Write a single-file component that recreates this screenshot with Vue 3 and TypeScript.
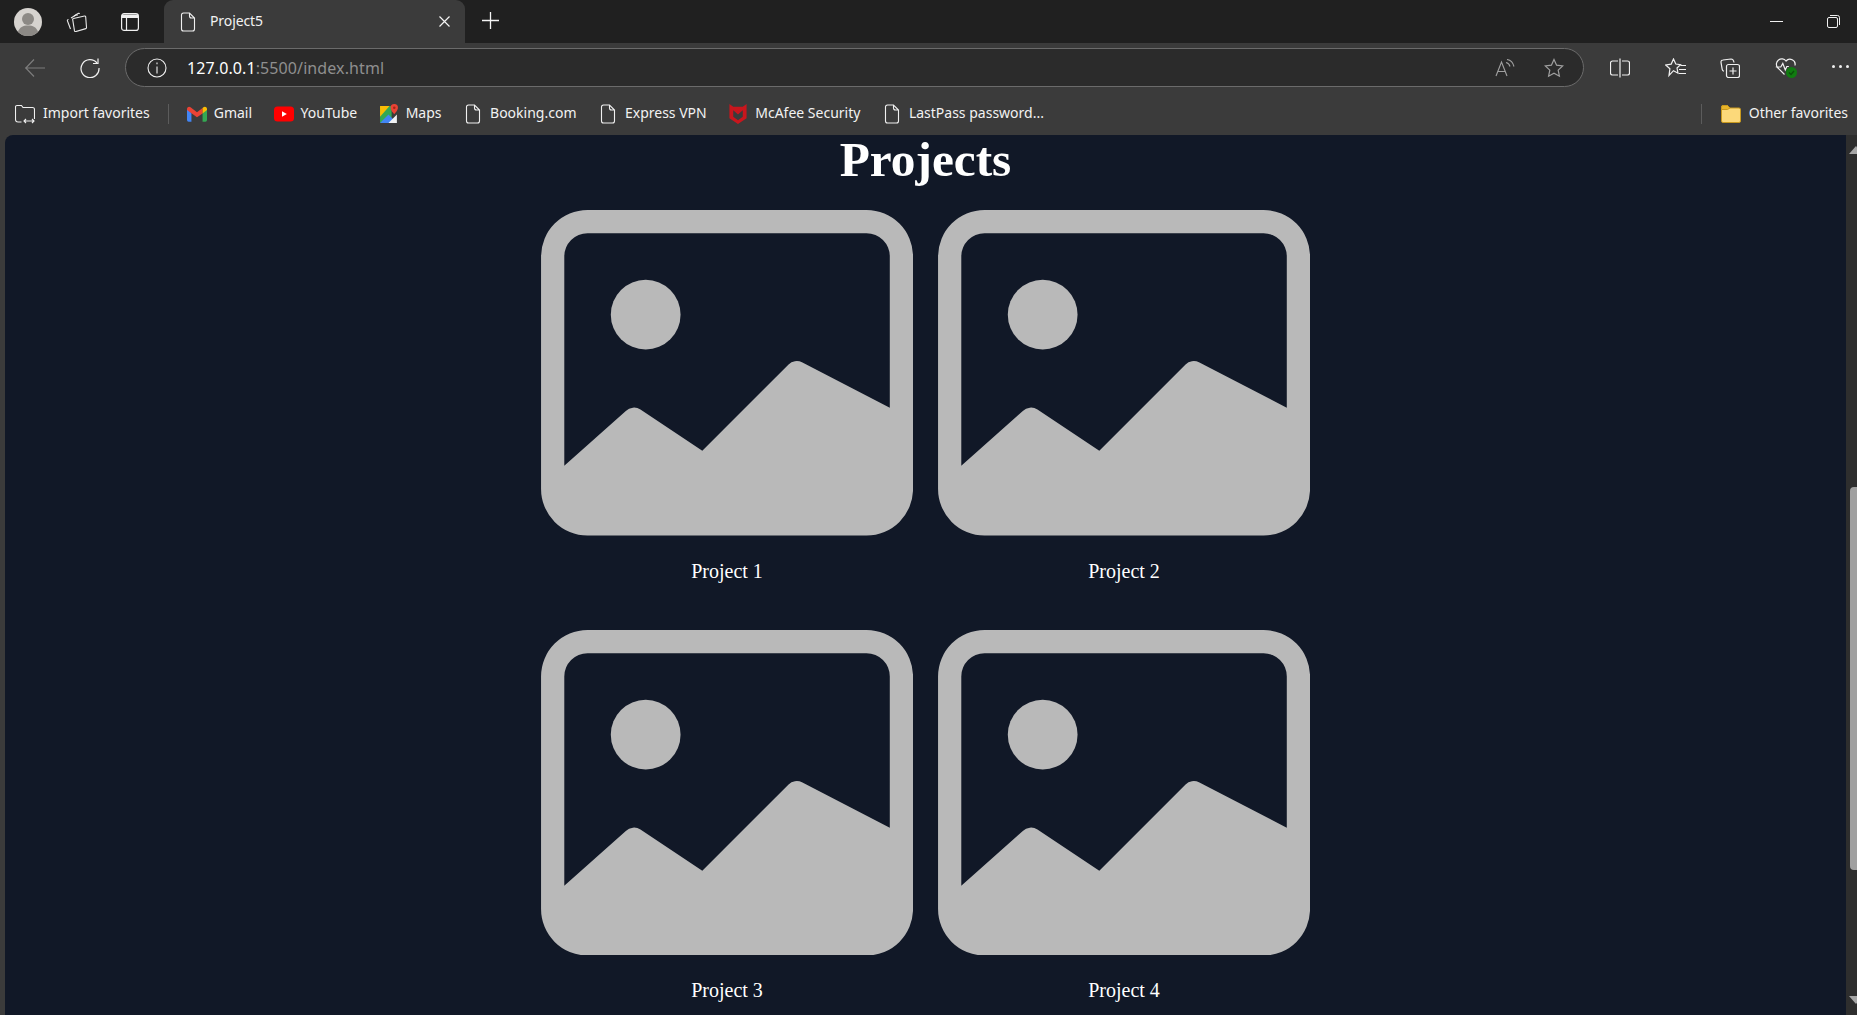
<script setup lang="ts">
const projects = ['Project 1', 'Project 2', 'Project 3', 'Project 4']
const docPath = 'M3 1h6l5 5v11a2 2 0 0 1-2 2H3a2 2 0 0 1-2-2V3a2 2 0 0 1 2-2zM9 1v3a2 2 0 0 0 2 2h3'
const pages = ['Booking.com', 'Express VPN']
</script>

<template>
  <div class="window">
    <header class="tabbar">
      <svg class="avatar" viewBox="0 0 28 28">
        <circle cx="14" cy="14" r="14" fill="#d6d3cf" />
        <circle cx="14" cy="11" r="6" fill="#8c8985" />
        <path d="M4 24c1.500-5 5-6.500 10-6.500s8.500 1.500 10 6.500a14 14 0 0 1-20 0z" fill="#8c8985" />
      </svg>
      <svg class="collections" viewBox="0 0 22 20" fill="none" stroke="#e8e8e8" stroke-width="1.100">
        <path d="M8 4l4-2.500a1 1 0 0 1 1.500.5" />
        <path d="M5 6l5-3a1 1 0 0 1 1.500 .5" />
        <path d="M2.500 7.500a1 1 0 0 0-1 1.500l3 8" />
        <path d="M7.500 6.500l11-2.500a1 1 0 0 1 1.200 1l.8 10.500a1 1 0 0 1-.7 1.100l-10 3a1 1 0 0 1-1.300-.7L6.700 7.700a1 1 0 0 1 .8-1.200z" />
      </svg>
      <svg class="tabs-icon" viewBox="0 0 18 18" fill="none" stroke="#f0f0f0" stroke-width="1.200">
        <rect x=".6" y=".6" width="16.800" height="16.800" rx="2.500" />
        <path d="M1 1.500h16V5H1z" fill="#f0f0f0" stroke="none" />
        <path d="M5.500 5v12.500" />
      </svg>
      <div class="tab">
        <svg class="doc-tab" viewBox="0 0 15 20" fill="none" stroke="#f0f0f0" stroke-width="1.100">
          <path :d="docPath" />
        </svg>
        <span class="tab-title">Project5</span>
        <svg class="tab-close" viewBox="0 0 11 11" stroke="#f4f4f4" stroke-width="1.200">
          <path d="M.5.500l10 10M10.500.500l-10 10" />
        </svg>
      </div>
      <svg class="plus" viewBox="0 0 17 17" stroke="#f4f4f4" stroke-width="1.300">
        <path d="M8.500 0v17M0 8.500h17" />
      </svg>
      <div class="window-controls">
        <span class="minimize"></span>
        <svg class="restore" viewBox="0 0 13 13" fill="none" stroke="#f0f0f0" stroke-width="1">
          <rect x=".5" y="2.500" width="10" height="10" rx="1.500" />
          <path d="M3 .5h7.500a2 2 0 0 1 2 2V10" />
        </svg>
      </div>
    </header>

    <div class="toolbar">
      <svg class="back" viewBox="0 0 20 18" fill="none" stroke="#7d7d7d" stroke-width="1.200">
        <path d="M0 9h20M9 .5L.8 9 9 17.500" />
      </svg>
      <svg class="reload" viewBox="0 0 20 20" fill="none" stroke="#f0f0f0" stroke-width="1.200">
        <path d="M17 5a9 9 0 1 0 2 5" />
        <path d="M18 .5V5.500h-5" />
      </svg>
      <div class="address">
        <svg class="info" viewBox="0 0 20 20" fill="none" stroke="#f0f0f0" stroke-width="1.100">
          <circle cx="10" cy="10" r="9" />
          <path d="M10 8.500v7M10 4.500v1.800" />
        </svg>
        <span class="url"><span class="host">127.0.0.1</span>:5500/index.html</span>
        <svg class="read-aloud" viewBox="0 0 20 18" fill="none" stroke="#a0a0a0" stroke-width="1.100">
          <path d="M1 17L6.500 3 12 17M3 12.500h7" />
          <path d="M11 3.500c2 .5 3.500 2 4 4M12 .5c3.500 .5 6 3 7 7" />
        </svg>
        <svg class="star" viewBox="0 0 20 20" fill="none" stroke="#a0a0a0" stroke-width="1.200">
          <path d="M10 1.500l2.600 5.700 6.100.7-4.500 4.200 1.200 6.100-5.400-3-5.400 3 1.200-6.100L1.300 7.900l6.100-.7z" />
        </svg>
      </div>
      <svg class="split" viewBox="0 0 20 20" fill="none" stroke="#f0f0f0" stroke-width="1.200">
        <path d="M8 3H2.500a2 2 0 0 0-2 2v10a2 2 0 0 0 2 2H8M12 3h5.500a2 2 0 0 1 2 2v10a2 2 0 0 1-2 2H12M10 .5v19" />
      </svg>
      <svg class="favs" viewBox="0 0 21 20" fill="none" stroke="#f0f0f0" stroke-width="1.200">
        <path d="M8.500 1l2.300 5 4.700.6-3.500 3.400 1 5.200-4.500-2.500-4.500 4.800.9-6.800L.7 7l5.500-.9z" />
        <path d="M15.500 7.500H21M14 11.500h7M14 15.500h7" />
      </svg>
      <svg class="coll" viewBox="0 0 20 20" fill="none" stroke="#f0f0f0" stroke-width="1.200">
        <path d="M14 4.500c-.3-2-1.500-3.500-3-3.500L3 2a2 2 0 0 0-2 2.300l1.200 7c.2 1 .8 1.700 1.800 2" />
        <rect x="6.500" y="6.500" width="13" height="13" rx="2" />
        <path d="M13 9.500v7M9.500 13h7" />
      </svg>
      <svg class="health" viewBox="0 0 22 21">
        <path d="M9.500 17.500L2.500 10.500a5.200 5.200 0 0 1 8.500-6.500 5.200 5.200 0 0 1 9 4.500M.8 10h5l2-3.500 2.500 6.500 1.500-3.500h2" fill="none" stroke="#f0f0f0" stroke-width="1.200" />
        <circle cx="16.500" cy="15.500" r="5.500" fill="#107c10" />
        <path d="M14 15.500l2 2 3-3.500" fill="none" stroke="#0b4f0b" stroke-width="1.300" />
      </svg>
      <div class="dots"><i></i><i></i><i></i></div>
    </div>

    <nav class="bookmarks">
      <div class="mark wide">
        <svg class="mark-ico" viewBox="0 0 20 20" fill="none" stroke="#f0f0f0" stroke-width="1.100">
          <path d="M6.500 18H3a2.500 2.500 0 0 1-2.500-2.500V3A1.500 1.500 0 0 1 2 1.500h4.500L8 3.500h9.500A2 2 0 0 1 19.500 5.500V15" />
          <path d="M9 17h10M11 15l-2 2 2 2M17 15l2 2-2 2" />
        </svg>
        <span>Import favorites</span>
      </div>
      <span class="sep"></span>
      <div class="mark">
        <svg class="mark-ico" viewBox="0 0 18 14">
          <path d="M0 2v10.500A1.500 1.500 0 0 0 1.500 14H4V6z" fill="#4285f4" />
          <path d="M14 6v8h2.500a1.500 1.500 0 0 0 1.500-1.500V2z" fill="#34a853" />
          <path d="M0 2.500a2 2 0 0 1 3.200-1.600L9 5.500l5-4v5L9 10 0 3.500z" fill="#ea4335" />
          <path d="M14 1.500l.8-.6A2 2 0 0 1 18 2.500v1L14 6.500z" fill="#fbbc04" />
        </svg>
        <span>Gmail</span>
      </div>
      <div class="mark">
        <svg class="mark-ico" viewBox="0 0 20 15">
          <rect width="20" height="15" rx="3.500" fill="#f00" />
          <path d="M8 4.800v5.400l4.800-2.700z" fill="#fff" />
        </svg>
        <span>YouTube</span>
      </div>
      <div class="mark">
        <svg class="mark-ico" viewBox="0 0 19 19">
          <path d="M1 2h11v16H1z" fill="#34a853" />
          <path d="M1 2h9L1 12z" fill="#fbbc04" />
          <path d="M1 18l8-8 8 8z" fill="#4285f4" />
          <path d="M9 18l8-8v8z" fill="#f1f3f4" />
          <path d="M14.500 0A3.500 3.500 0 0 1 18 3.500c0 2.500-3.500 6-3.500 6s-3.500-3.500-3.500-6A3.500 3.500 0 0 1 14.500 0z" fill="#ea4335" />
          <circle cx="14.500" cy="3.500" r="1.200" fill="#a52714" />
        </svg>
        <span>Maps</span>
      </div>
      <div v-for="page in pages" :key="page" class="mark">
        <svg class="mark-ico" viewBox="0 0 15 20" fill="none" stroke="#f0f0f0" stroke-width="1.100">
          <path :d="docPath" />
        </svg>
        <span>{{ page }}</span>
      </div>
      <div class="mark">
        <svg class="mark-ico" viewBox="0 0 18 21">
          <path d="M0 0l4 3h10l4-3v15l-9 6-9-6zM4 6.500v7l5 3.500 5-3.500v-7l-5 4.500z" fill="#c8161d" fill-rule="evenodd" />
        </svg>
        <span>McAfee Security</span>
      </div>
      <div class="mark">
        <svg class="mark-ico" viewBox="0 0 15 20" fill="none" stroke="#f0f0f0" stroke-width="1.100">
          <path :d="docPath" />
        </svg>
        <span>LastPass password...</span>
      </div>
      <div class="other">
        <span class="sep"></span>
        <div class="mark wide">
          <svg class="mark-ico" viewBox="0 0 20 18">
            <path d="M.5 2A1.500 1.500 0 0 1 2 .5h4.500L9 3h9a1.500 1.500 0 0 1 1.500 1.500V16a1.500 1.500 0 0 1-1.500 1.500H2A1.500 1.500 0 0 1 .5 16z" fill="#fcd97a" stroke="#c8991e" />
            <path d="M.5 4.500h6L9 3 6.500.5H2A1.500 1.500 0 0 0 .5 2z" fill="#e8b42a" stroke="#c8991e" />
          </svg>
          <span>Other favorites</span>
        </div>
      </div>
    </nav>

    <div class="viewport">
      <main class="page">
        <h1>Projects</h1>
        <section class="grid">
          <figure v-for="name in projects" :key="name" class="project">
            <svg class="thumb" viewBox="0 1 16 14" fill="currentColor">
              <path d="M6.002 5.500a1.500 1.500 0 1 1-3 0 1.500 1.500 0 0 1 3 0z" />
              <path d="M2.002 1a2 2 0 0 0-2 2v10a2 2 0 0 0 2 2h12a2 2 0 0 0 2-2V3a2 2 0 0 0-2-2h-12zm12 1a1 1 0 0 1 1 1v6.500l-3.777-1.947a.5.5 0 0 0-.577.093l-3.710 3.710-2.660-1.772a.5.5 0 0 0-.630.062L1.002 12V3a1 1 0 0 1 1-1h12z" />
            </svg>
            <figcaption>{{ name }}</figcaption>
          </figure>
        </section>
      </main>
      <div class="scrollbar">
        <span class="arrow up"></span>
        <span class="thumb-bar"></span>
        <span class="arrow down"></span>
      </div>
    </div>
  </div>
</template>

<style>
html, body { margin: 0; overflow: hidden; background: #3b3b3b; }
</style>

<style scoped>
.window {
  height: 100vh;
  display: flex;
  flex-direction: column;
  overflow: hidden;
  font-family: "Noto Sans", "Open Sans", sans-serif;
  color: #f2f2f2;
}
svg { display: block; flex: none; }

/* tab strip */
.tabbar {
  height: 43px;
  flex: none;
  display: flex;
  align-items: center;
  background: #202020;
  padding-left: 14px;
}
.avatar { width: 28px; height: 28px; }
.collections { width: 22px; height: 20px; margin-left: 24px; }
.tabs-icon { width: 18px; height: 18px; margin-left: 33px; }
.tab {
  align-self: stretch;
  width: 301px;
  margin-left: 25px;
  display: flex;
  align-items: center;
  background: #3b3b3b;
  border-radius: 9px 9px 0 0;
  padding: 0 15px 0 16px;
  box-sizing: border-box;
}
.doc-tab { width: 16px; height: 20px; }
.tab-title { margin-left: 14px; font-size: 14px; letter-spacing: -.1px; flex: 1; margin-top: -2px; }
.tab-close { width: 11px; height: 11px; }
.plus { width: 17px; height: 17px; margin-left: 17px; margin-top: -2px; }
.window-controls {
  margin-left: auto;
  display: flex;
  align-items: center;
  padding-right: 17px;
  gap: 44px;
  margin-top: -1px;
}
.minimize { width: 13px; height: 1px; background: #f0f0f0; }
.restore { width: 13px; height: 13px; }

/* address row */
.toolbar {
  height: 49px;
  flex: none;
  display: flex;
  align-items: center;
  background: #3b3b3b;
  padding-left: 25px;
}
.back { width: 20px; height: 18px; }
.reload { width: 20px; height: 20px; margin-left: 35px; }
.address {
  width: 1459px;
  height: 39px;
  margin-left: 25px;
  display: flex;
  align-items: center;
  box-sizing: border-box;
  background: #2b2b2b;
  border: 1px solid #6b6b6b;
  border-radius: 20px;
  padding: 0 19px 0 21px;
}
.info { width: 20px; height: 20px; }
.url { margin-left: 20px; flex: 1; font-size: 16px; color: #8f8f8f; letter-spacing: .1px; }
.host { color: #fff; }
.read-aloud { width: 20px; height: 18px; }
.star { width: 20px; height: 20px; margin-left: 29px; }
.split { width: 20px; height: 20px; margin-left: 26px; }
.favs { width: 21px; height: 20px; margin-left: 35px; }
.coll { width: 20px; height: 20px; margin-left: 34px; }
.health { width: 22px; height: 21px; margin-left: 35px; }
.dots { margin-left: 35px; display: flex; gap: 4px; margin-top: -2px; }
.dots i { width: 3px; height: 3px; border-radius: 50%; background: #f0f0f0; }

/* favorites bar */
.bookmarks {
  height: 43px;
  flex: none;
  display: flex;
  align-items: center;
  gap: 21.500px;
  background: #3b3b3b;
  padding-left: 15px;
  font-size: 14px;
  white-space: nowrap;
}
.mark { display: flex; align-items: center; gap: 7px; }
.mark.wide { gap: 8px; }
.mark span { margin-top: -2px; }
.mark-ico { width: 20px; height: 20px; }
.sep { width: 1px; height: 20px; background: #5c5c5c; margin: 0 -3.500px; }
.other { margin-left: auto; display: flex; align-items: center; gap: 22px; padding-right: 9px; }

/* page */
.viewport {
  flex: 1;
  min-height: 0;
  display: flex;
  background: #3b3b3b;
  padding-left: 5px;
}
.page {
  flex: 1;
  background: #111827;
  border-top-left-radius: 8px;
  color: #fff;
  font-family: "Liberation Serif", "Times New Roman", serif;
  text-align: center;
}
h1 {
  margin: 0;
  font-size: 49.300px;
  line-height: 50px;
  font-weight: 700;
}
.grid {
  margin: 25px auto 0;
  width: 769px;
  display: grid;
  grid-template-columns: 372px 372px;
  column-gap: 25px;
  row-gap: 34px;
}
.project { margin: 0; }
.thumb { width: 372px; height: 325.500px; color: #b9b9b9; }
figcaption { margin-top: 24px; font-size: 20px; line-height: 22px; padding-bottom: 14px; }

/* scrollbar, clipped by the window edge */
.scrollbar {
  width: 11px;
  flex: none;
  display: flex;
  flex-direction: column;
  align-items: flex-start;
  background: #2e2e2e;
  padding-left: 4px;
  box-sizing: border-box;
  overflow: hidden;
}
.arrow { width: 0; height: 0; border-left: 7px solid transparent; border-right: 7px solid transparent; }
.up { border-bottom: 8px solid #a6a6a6; margin-top: 11px; margin-left: -1px; }
.down { border-top: 8px solid #a6a6a6; margin-top: 126px; margin-left: -1px; }
.thumb-bar {
  width: 7px;
  height: 383px;
  flex: none;
  margin-top: 333px;
  background: #a0a0a0;
  border-radius: 4px 0 0 4px;
}
</style>
